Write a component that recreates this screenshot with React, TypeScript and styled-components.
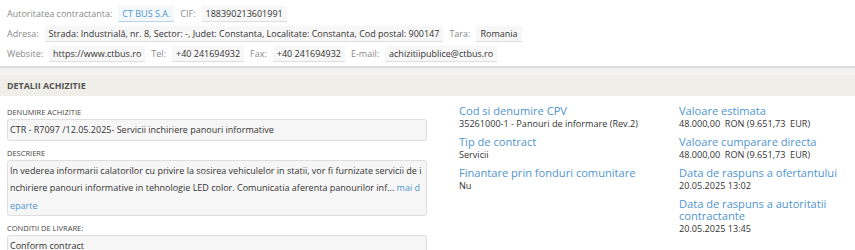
import React from 'react';
import styled, { createGlobalStyle } from 'styled-components';

const Global = createGlobalStyle`
    body {
        margin: 0;
        background: #fff;
        font-family: "Open Sans", "Liberation Sans", sans-serif;
        color: #333;
    }
`;

const Top = styled.div`
    padding: 6px 7px 5px;
    display: flex;
    flex-direction: column;
    gap: 5px;
    border-bottom: 2px solid #dcdcdc;
`;

const InfoRow = styled.div`
    display: flex;
    align-items: center;
    height: 15px;
    white-space: nowrap;
`;

const Label = styled.span`
    font-size: 9px;
    color: #8a8a8a;
    margin-right: 6px;
`;

const Chip = styled.span<{ $link?: boolean }>`
    display: inline-block;
    font-size: 9px;
    padding: 1px 4px 1px;
    margin-right: 6px;
    background: ${p => p.$link ? '#f4f8fb' : '#f7f7f7'};
    border-bottom: 1px solid ${p => p.$link ? '#b9d3e8' : '#dedede'};
    color: ${p => p.$link ? '#4f95cf' : '#333'};
`;

const Gap = styled.div`
    height: 7px;
    background: #f2f2f2;
`;

const SectionHead = styled.div`
    height: 21px;
    display: flex;
    align-items: center;
    padding: 0 7px;
    background: #efeee8;
    font-size: 8.9px;
    font-weight: 700;
    color: #555;
`;

const Body = styled.div`
    display: grid;
    grid-template-columns: 420px 220px 1fr;
    padding: 0 7px;
`;

const LeftCol = styled.div`
    display: flex;
    flex-direction: column;
    padding-top: 12px;
`;

const FieldLabel = styled.div`
    font-size: 7.5px;
    line-height: 9px;
    color: #444;
    text-transform: uppercase;
    margin-bottom: 2px;
`;

const FieldBox = styled.div`
    background: #f6f6f6;
    border: 1px solid #dedede;
    border-radius: 3px;
    padding: 1px 2px;
    font-size: 9px;
    line-height: 17.5px;
    margin-bottom: 8px;
    word-break: break-all;
`;

const More = styled.span`
    color: #4f95cf;
`;

const InfoCol = styled.div`
    display: flex;
    flex-direction: column;
    padding: 8px 0 0 32px;
    gap: 5px;
`;

const Item = styled.div`
    display: flex;
    flex-direction: column;
`;

const ItemTitle = styled.div`
    color: #4f95cf;
    font-size: 11.1px;
    line-height: 12px;
    padding: 1px 0;
`;

const ItemValue = styled.div`
    font-size: 9.1px;
    line-height: 12px;
    color: #333;
    white-space: pre-wrap;
`;

const info = [
    [
        ['Cod si denumire CPV', '35261000-1 - Panouri de informare (Rev.2)'],
        ['Tip de contract', 'Servicii'],
        ['Finantare prin fonduri comunitare', 'Nu'],
    ],
    [
        ['Valoare estimata', '48.000,00  RON (9.651,73  EUR)'],
        ['Valoare cumparare directa', '48.000,00  RON (9.651,73  EUR)'],
        ['Data de raspuns a ofertantului', '20.05.2025 13:02'],
        ['Data de raspuns a autoritatii contractante', '20.05.2025 13:45'],
    ],
];

export default function App() {
    return (
        <>
            <Global />
            <Top>
                <InfoRow>
                    <Label>Autoritatea contractanta:</Label>
                    <Chip $link>CT BUS S.A.</Chip>
                    <Label>CIF:</Label>
                    <Chip>188390213601991</Chip>
                </InfoRow>
                <InfoRow>
                    <Label>Adresa:</Label>
                    <Chip>Strada: Industrială, nr. 8, Sector: -, Judet: Constanta, Localitate: Constanta, Cod postal: 900147</Chip>
                    <Label>Tara:</Label>
                    <Chip>Romania</Chip>
                </InfoRow>
                <InfoRow>
                    <Label>Website:</Label>
                    <Chip>https://www.ctbus.ro</Chip>
                    <Label>Tel:</Label>
                    <Chip>+40 241694932</Chip>
                    <Label>Fax:</Label>
                    <Chip>+40 241694932</Chip>
                    <Label>E-mail:</Label>
                    <Chip>achizitiipublice@ctbus.ro</Chip>
                </InfoRow>
            </Top>
            <Gap />
            <SectionHead>DETALII ACHIZITIE</SectionHead>
            <Body>
                <LeftCol>
                    <FieldLabel>Denumire achizitie</FieldLabel>
                    <FieldBox>CTR - R7097 /12.05.2025- Servicii inchiriere panouri informative</FieldBox>
                    <FieldLabel>Descriere</FieldLabel>
                    <FieldBox>
                        In vederea informarii calatorilor cu privire la sosirea vehiculelor in statii, vor fi furnizate servicii de inchiriere panouri informative in tehnologie LED color. Comunicatia aferenta panourilor inf... <More>mai departe</More>
                    </FieldBox>
                    <FieldLabel>Conditii de livrare:</FieldLabel>
                    <FieldBox>Conform contract</FieldBox>
                </LeftCol>
                {info.map((col, ci) => (
                    <InfoCol key={ci}>
                        {col.map(([t, v]) => (
                            <Item key={t}>
                                <ItemTitle>{t}</ItemTitle>
                                <ItemValue>{v}</ItemValue>
                            </Item>
                        ))}
                    </InfoCol>
                ))}
            </Body>
        </>
    );
}
